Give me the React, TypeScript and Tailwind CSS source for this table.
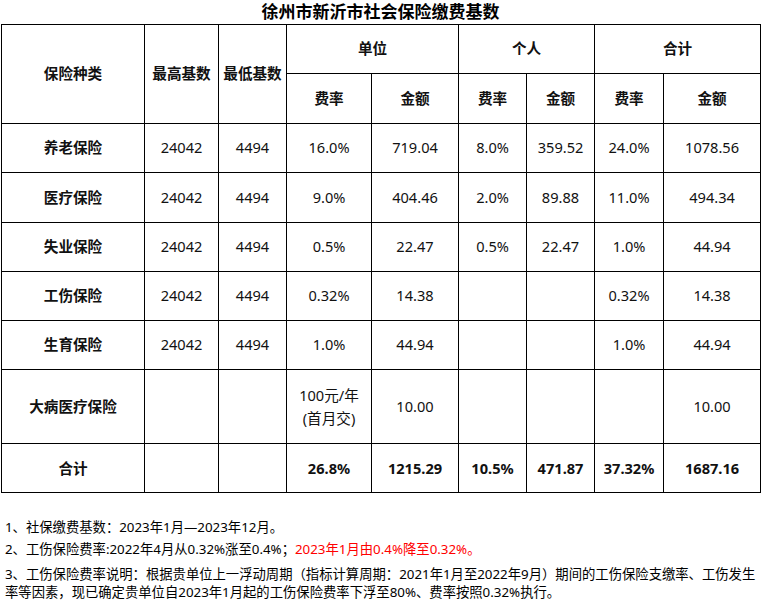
import React from 'react';

type Row = {
  name: string;
  max: string;
  min: string;
  unitRate: React.ReactNode;
  unitAmt: string;
  perRate: string;
  perAmt: string;
  sumRate: string;
  sumAmt: string;
  tall?: boolean;
};

const rows: Row[] = [
  { name: '养老保险', max: '24042', min: '4494', unitRate: '16.0%', unitAmt: '719.04', perRate: '8.0%', perAmt: '359.52', sumRate: '24.0%', sumAmt: '1078.56' },
  { name: '医疗保险', max: '24042', min: '4494', unitRate: '9.0%', unitAmt: '404.46', perRate: '2.0%', perAmt: '89.88', sumRate: '11.0%', sumAmt: '494.34' },
  { name: '失业保险', max: '24042', min: '4494', unitRate: '0.5%', unitAmt: '22.47', perRate: '0.5%', perAmt: '22.47', sumRate: '1.0%', sumAmt: '44.94' },
  { name: '工伤保险', max: '24042', min: '4494', unitRate: '0.32%', unitAmt: '14.38', perRate: '', perAmt: '', sumRate: '0.32%', sumAmt: '14.38' },
  { name: '生育保险', max: '24042', min: '4494', unitRate: '1.0%', unitAmt: '44.94', perRate: '', perAmt: '', sumRate: '1.0%', sumAmt: '44.94' },
  {
    name: '大病医疗保险',
    max: '',
    min: '',
    unitRate: (
      <span className="block leading-[23px]">
        100元/年
        <br />
        (首月交)
      </span>
    ),
    unitAmt: '10.00',
    perRate: '',
    perAmt: '',
    sumRate: '',
    sumAmt: '10.00',
    tall: true,
  },
];

const cell = 'border border-black text-center align-middle p-0';

export default function App() {
  return (
    <div
      className="w-[761px] h-[607px] bg-white text-[#111] overflow-hidden"
      style={{ fontFamily: '"Noto Sans", "Noto Sans CJK SC", sans-serif' }}
    >
      {/* Title */}
      <h1 className="h-[24px] text-center text-[17px] font-bold leading-[24px] text-black">
        徐州市新沂市社会保险缴费基数
      </h1>

      {/* Table */}
      <table className="ml-[1px] w-[759px] table-fixed border-collapse text-[14.6px]">
        <colgroup>
          <col className="w-[143px]" />
          <col className="w-[74px]" />
          <col className="w-[68px]" />
          <col className="w-[85px]" />
          <col className="w-[87px]" />
          <col className="w-[68px]" />
          <col className="w-[68px]" />
          <col className="w-[69px]" />
          <col className="w-[97px]" />
        </colgroup>
        <thead className="font-bold">
          <tr className="h-[49px]">
            <th rowSpan={2} className={cell}>保险种类</th>
            <th rowSpan={2} className={cell}>最高基数</th>
            <th rowSpan={2} className={cell}>最低基数</th>
            <th colSpan={2} className={cell}>单位</th>
            <th colSpan={2} className={cell}>个人</th>
            <th colSpan={2} className={cell}>合计</th>
          </tr>
          <tr className="h-[50px]">
            <th className={cell}>费率</th>
            <th className={cell}>金额</th>
            <th className={cell}>费率</th>
            <th className={cell}>金额</th>
            <th className={cell}>费率</th>
            <th className={cell}>金额</th>
          </tr>
        </thead>
        <tbody>
          {rows.map((r) => (
            <tr key={r.name} className={r.tall ? 'h-[74px]' : 'h-[49.3px]'}>
              <td className={`${cell} font-bold`}>{r.name}</td>
              <td className={cell}>{r.max}</td>
              <td className={cell}>{r.min}</td>
              <td className={cell}>{r.unitRate}</td>
              <td className={cell}>{r.unitAmt}</td>
              <td className={cell}>{r.perRate}</td>
              <td className={cell}>{r.perAmt}</td>
              <td className={cell}>{r.sumRate}</td>
              <td className={cell}>{r.sumAmt}</td>
            </tr>
          ))}
          <tr className="h-[49px] font-bold">
            <td className={cell}>合计</td>
            <td className={cell}></td>
            <td className={cell}></td>
            <td className={cell}>26.8%</td>
            <td className={cell}>1215.29</td>
            <td className={cell}>10.5%</td>
            <td className={cell}>471.87</td>
            <td className={cell}>37.32%</td>
            <td className={cell}>1687.16</td>
          </tr>
        </tbody>
      </table>

      {/* Notes */}
      <div className="px-[5px] pt-[23px] text-[13.33px] text-black">
        <p className="leading-[22px]">1、社保缴费基数：2023年1月—2023年12月。</p>
        <p className="leading-[22px]">
          2、工伤保险费率:2022年4月从0.32%涨至0.4%；
          <span className="text-[#ff0000]">2023年1月由0.4%降至0.32%。</span>
        </p>
        <p className="mt-[6px] leading-[17.5px]">
          3、工伤保险费率说明：根据贵单位上一浮动周期（指标计算周期：2021年1月至2022年9月）期间的工伤保险支缴率、工伤发生率等因素，现已确定贵单位自2023年1月起的工伤保险费率下浮至80%、费率按照0.32%执行。
        </p>
      </div>
    </div>
  );
}
